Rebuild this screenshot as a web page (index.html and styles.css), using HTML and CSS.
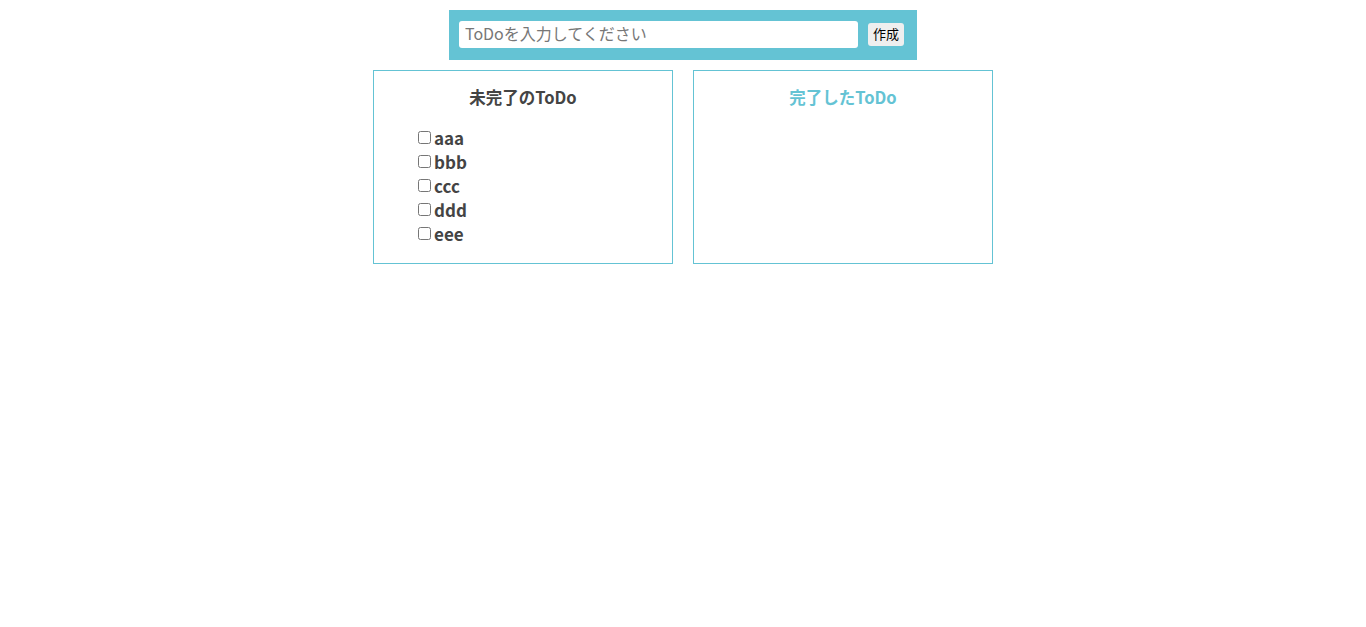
FILE: index.html
```html
<!DOCTYPE html>
<html lang="ja">
<head>
<meta charset="utf-8">
<title>ToDo</title>
<link rel="stylesheet" href="styles.css">
</head>
<body>
<div class="input-area">
  <input class="todo-input" type="text" placeholder="ToDoを入力してください">
  <button class="add-btn">作成</button>
</div>
<div class="boards">
  <section class="board">
    <p class="title">未完了のToDo</p>
    <ul class="list">
      <li class="item"><input type="checkbox" class="check"><span>aaa</span></li>
      <li class="item"><input type="checkbox" class="check"><span>bbb</span></li>
      <li class="item"><input type="checkbox" class="check"><span>ccc</span></li>
      <li class="item"><input type="checkbox" class="check"><span>ddd</span></li>
      <li class="item"><input type="checkbox" class="check"><span>eee</span></li>
    </ul>
  </section>
  <section class="board">
    <p class="title done">完了したToDo</p>
    <ul class="list"></ul>
  </section>
</div>
</body>
</html>
```
FILE: styles.css
```css
html, body {
  margin: 0;
  padding: 0;
  background: #fff;
}
body {
  padding-top: 10px;
  font-family: "Noto Sans CJK JP", "Noto Sans", sans-serif;
  color: #444;
}
.input-area {
  width: 468px;
  height: 50px;
  box-sizing: border-box;
  margin: 0 auto;
  background: #64c3d4;
  display: flex;
  align-items: flex-start;
  padding: 11px 13px 0 10px;
  gap: 10px;
}
.todo-input {
  width: 400px;
  height: 27px;
  box-sizing: border-box;
  border: none;
  border-radius: 3px;
  padding: 0 6px 3px;
  font-family: "Noto Sans CJK JP", sans-serif;
  font-size: 16px;
  outline: none;
}
.todo-input::placeholder {
  color: #777;
}
.add-btn {
  width: 36px;
  height: 23px;
  margin-top: 2px;
  padding: 0 0 1px;
  border: none;
  border-radius: 3px;
  background: #efefef;
  color: #000;
  font-family: "Noto Sans CJK JP", sans-serif;
  font-size: 13px;
  line-height: 22px;
}
.boards {
  display: flex;
  justify-content: center;
  gap: 20px;
  margin-top: 10px;
}
.board {
  width: 300px;
  height: 194px;
  box-sizing: border-box;
  border: 1px solid #64c3d4;
}
.title {
  margin: 14px 0 0;
  text-align: center;
  font-weight: bold;
  font-size: 16.5px;
  line-height: 24px;
  color: #444;
}
.title.done {
  color: #64c3d4;
}
.list {
  list-style: none;
  margin: 16px 0 0;
  padding: 0 0 0 40px;
}
.item {
  display: flex;
  align-items: center;
  height: 24px;
  font-weight: bold;
  font-size: 17px;
}
.check {
  width: 13px;
  height: 13px;
  margin: 0 3px 0 4px;
}
```
